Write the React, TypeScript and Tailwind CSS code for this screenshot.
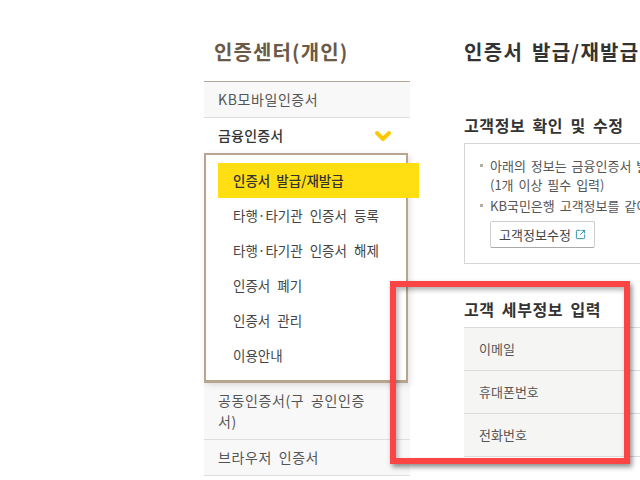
import { ChevronDown, SquareArrowOutUpRight } from "lucide-react";

const subMenu = [
  "타행·타기관 인증서 등록",
  "타행·타기관 인증서 해제",
  "인증서 폐기",
  "인증서 관리",
  "이용안내",
];

const detailRows = ["이메일", "휴대폰번호", "전화번호"];

export default function App() {
  return (
    <div className="relative w-[640px] h-[480px] overflow-hidden bg-white flex pl-[204px] font-['Noto_Sans_CJK_KR','Liberation_Sans',sans-serif] text-[#333]">
      {/* sidebar */}
      <aside className="w-[206px] shrink-0">
        <h2 className="h-[81px] pt-[37px] pl-[10px] text-[20px] leading-[30px] font-bold text-[#6b5a48] tracking-[1.1px]">
          인증센터(개인)
        </h2>
        <ul className="border-t border-[#b5a698] text-[14px] text-[#555]">
          <li className="h-[36px] pl-[14px] flex items-center bg-[#f8f8f8] border-b border-[#dedede] tracking-[0.6px]">
            KB모바일인증서
          </li>
          <li className="h-[35px] pl-[14px] pr-[15px] flex items-center justify-between font-medium text-[#333] tracking-[0.2px]">
            금융인증서
            <ChevronDown className="w-[24px] h-[24px] text-[#fdc800]" strokeWidth={4} />
          </li>
          <li className="relative z-10 w-[204px] h-[230px] border-2 border-b-[3px] border-[#b8a58f] bg-white shadow-[2px_2px_6px_rgba(0,0,0,0.12)] pt-[8px] text-[13.5px]">
            <div className="w-[201px] h-[35px] ml-[12px] pl-[15px] flex items-center bg-[#ffdf12] font-medium text-[#333] [word-spacing:3px]">
              인증서 발급/재발급
            </div>
            {subMenu.map((label) => (
              <div key={label} className="h-[35px] pl-[27px] flex items-center text-[#444] [word-spacing:4px]">
                {label}
              </div>
            ))}
          </li>
          <li className="h-[57px] pl-[14px] pr-[36px] flex items-center leading-[21px] bg-[#f8f8f8] border-b border-[#dedede] tracking-[0.6px] [word-spacing:3px]">
            공동인증서(구 공인인증서)
          </li>
          <li className="h-[36px] pl-[14px] flex items-center bg-[#f8f8f8] border-b border-[#dedede] tracking-[0.6px] [word-spacing:3px]">
            브라우저 인증서
          </li>
        </ul>
      </aside>

      {/* main */}
      <main className="ml-[54px] w-[400px] shrink-0">
        <h1 className="pt-[37px] text-[20px] leading-[30px] font-bold text-[#333] tracking-[1.3px] [word-spacing:3px]">
          인증서 발급/재발급
        </h1>
        <h3 className="mt-[46px] text-[16px] leading-[24px] font-bold text-[#333] tracking-[0.6px] [word-spacing:3px]">
          고객정보 확인 및 수정
        </h3>
        <div className="mt-[6px] h-[121px] border border-[#d4d4d4] pt-[12px] pl-[15px] text-[13px] leading-[19px] text-[#555]">
          <p className="relative pl-[10px] [word-spacing:2px] before:absolute before:left-0 before:top-[8px] before:w-[3px] before:h-[3px] before:bg-[#b5aca2]">
            아래의 정보는 금융인증서 발급시 필요한 정보입니다.
            <br />
            (1개 이상 필수 입력)
          </p>
          <p className="relative mt-[2px] pl-[10px] [word-spacing:2px] before:absolute before:left-0 before:top-[8px] before:w-[3px] before:h-[3px] before:bg-[#b5aca2]">
            KB국민은행 고객정보를 같이 변경합니다.
          </p>
          <button className="mt-[6px] ml-[10px] w-[105px] h-[27px] flex items-center justify-center gap-[4px] border border-[#cfcfcf] border-b-[#aaa] rounded-[2px] text-[13px] text-[#444]">
            고객정보수정
            <SquareArrowOutUpRight className="w-[11px] h-[11px] text-[#1e8aa8]" strokeWidth={2} />
          </button>
        </div>
        <h3 className="mt-[33px] text-[16px] leading-[24px] font-bold text-[#333] tracking-[0.6px] [word-spacing:3px]">
          고객 세부정보 입력
        </h3>
        <div className="mt-[6px] border-t border-[#dcdcdc]">
          {detailRows.map((label) => (
            <div key={label} className="h-[43px] flex border-b border-[#dcdcdc]">
              <div className="w-[165px] pl-[15px] flex items-center bg-[#f5f5f3] text-[13px] text-[#555]">
                {label}
              </div>
            </div>
          ))}
        </div>
      </main>

      {/* red highlight drawn over the screenshot */}
      <div className="absolute z-20 left-[390px] top-[281px] w-[240px] h-[183px] border-[6px] border-[#fb4444] shadow-[2px_3px_5px_rgba(0,0,0,0.45),inset_2px_3px_5px_rgba(0,0,0,0.3)]" />
    </div>
  );
}
